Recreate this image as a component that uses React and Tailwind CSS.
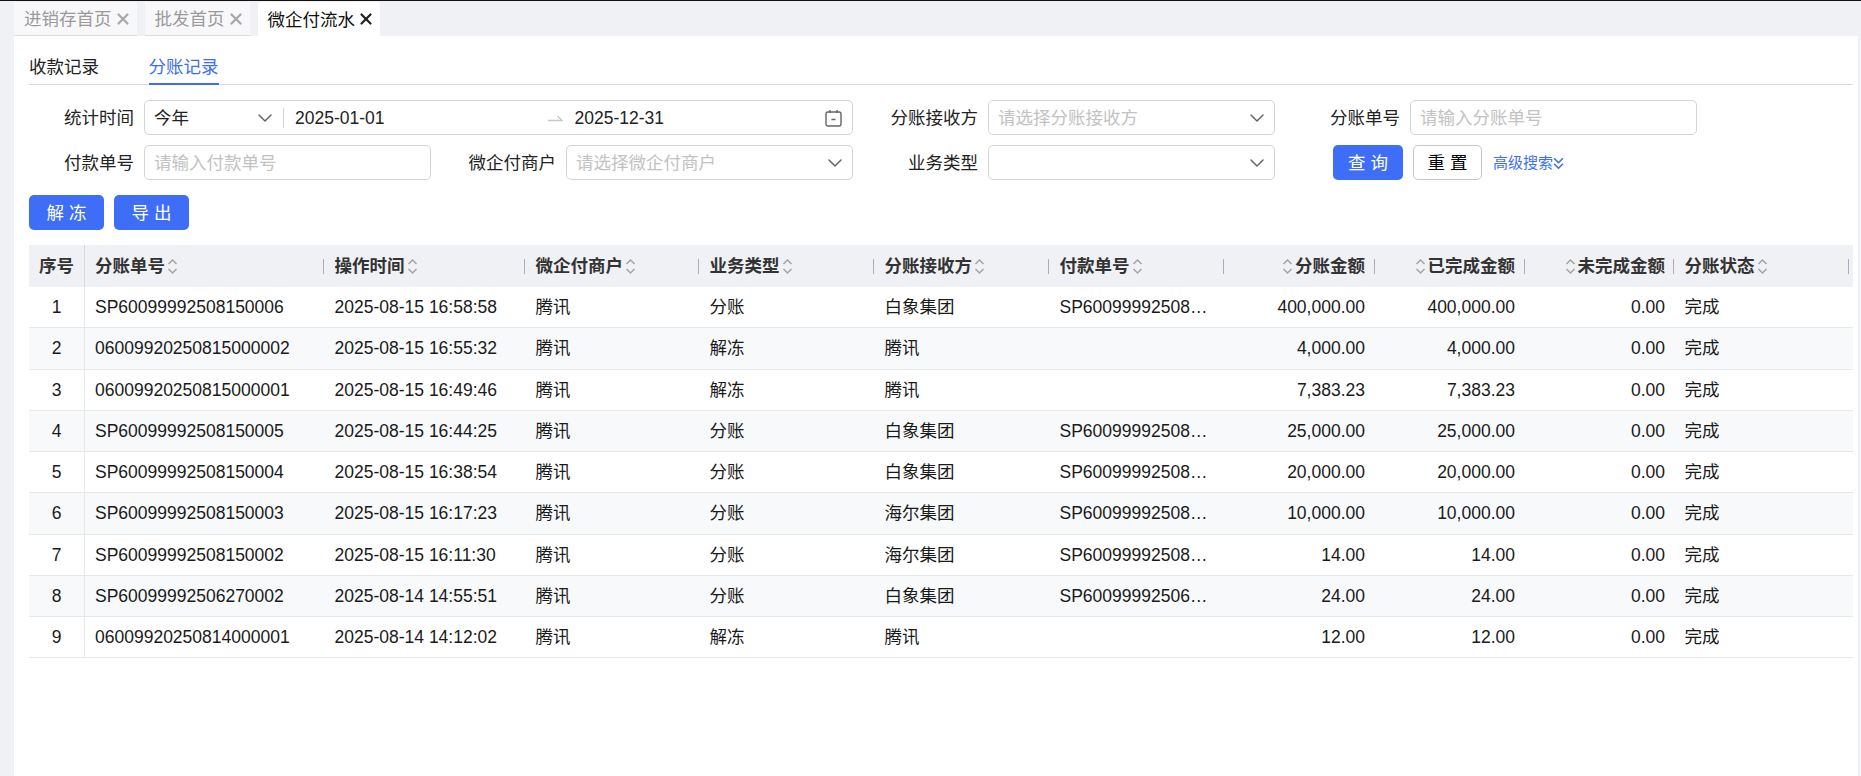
import React from 'react';
import { ChevronDown, ChevronsDown, X } from 'lucide-react';

const COLS = 'grid grid-cols-[56px_239px_201px_174px_175px_175px_175px_151px_150px_149px_175px_4px]';

const rows = [
  ['1', 'SP60099992508150006', '2025-08-15 16:58:58', '分账', '白象集团', 'SP60099992508150006001', '400,000.00', '400,000.00'],
  ['2', '06009920250815000002', '2025-08-15 16:55:32', '解冻', '腾讯', '', '4,000.00', '4,000.00'],
  ['3', '06009920250815000001', '2025-08-15 16:49:46', '解冻', '腾讯', '', '7,383.23', '7,383.23'],
  ['4', 'SP60099992508150005', '2025-08-15 16:44:25', '分账', '白象集团', 'SP60099992508150005001', '25,000.00', '25,000.00'],
  ['5', 'SP60099992508150004', '2025-08-15 16:38:54', '分账', '白象集团', 'SP60099992508150004001', '20,000.00', '20,000.00'],
  ['6', 'SP60099992508150003', '2025-08-15 16:17:23', '分账', '海尔集团', 'SP60099992508150003001', '10,000.00', '10,000.00'],
  ['7', 'SP60099992508150002', '2025-08-15 16:11:30', '分账', '海尔集团', 'SP60099992508150002001', '14.00', '14.00'],
  ['8', 'SP60099992506270002', '2025-08-14 14:55:51', '分账', '白象集团', 'SP60099992506270002001', '24.00', '24.00'],
  ['9', '06009920250814000001', '2025-08-14 14:12:02', '解冻', '腾讯', '', '12.00', '12.00'],
];

const heads = [
  { t: '分账单号', pad: 'px-[10px]' },
  { t: '操作时间', pad: 'px-[10.5px]' },
  { t: '微企付商户', pad: 'px-[10.5px]' },
  { t: '业务类型', pad: 'px-[10.5px]' },
  { t: '分账接收方', pad: 'px-[10.5px]' },
  { t: '付款单号', pad: 'px-[10.5px]' },
  { t: '分账金额', right: true, pad: 'pl-[4px] pr-[9px]' },
  { t: '已完成金额', right: true, pad: 'pl-[4px] pr-[9px]' },
  { t: '未完成金额', right: true, pad: 'pl-[4px] pr-[8px]' },
  { t: '分账状态', pad: 'px-[10.5px]' },
];

function SortIcon() {
  return (
    <svg width="11" height="17" viewBox="0 0 11 17" fill="none" stroke="#a3a3a3" strokeWidth="1.5" className="shrink-0">
      <path d="M1.5 6 5.5 2l4 4" />
      <path d="M1.5 11l4 4 4-4" />
    </svg>
  );
}

function CalendarIcon() {
  return (
    <svg width="17" height="18" viewBox="0 0 17 18" fill="none" stroke="#666" strokeWidth="1.4">
      <rect x="1" y="3" width="15" height="14" rx="2" />
      <path d="M5 1v3M12 1v3M6.5 10.5h4" />
    </svg>
  );
}

function Select({ placeholder }) {
  return (
    <div className="flex h-[35px] items-center justify-between rounded-[5px] border border-[#d4d4d4] pl-[9px] pr-[5px]">
      <span className="pt-[2px] text-[#c2c2c2]">{placeholder}</span>
      <ChevronDown size={24} strokeWidth={1.5} className="text-[#666]" />
    </div>
  );
}

function Field({ label, children, span }) {
  return (
    <div className={`flex items-center pr-[20px] ${span ? 'col-span-2' : ''}`}>
      <label className="w-[105px] shrink-0 pt-[2px] text-right">{label}</label>
      <div className="ml-[10px] min-w-0 flex-1">{children}</div>
    </div>
  );
}

function TextInput({ placeholder }) {
  return (
    <input
      placeholder={placeholder}
      className="h-[35px] w-full rounded-[5px] border border-[#d4d4d4] px-[9px] pt-[2px] outline-none placeholder:text-[#c2c2c2]"
    />
  );
}

function Tab({ title, active }) {
  return (
    <div
      className={`flex h-[34px] items-center gap-[2px] pl-[10px] pr-[5px] ${
        active ? 'rounded-t-[3px] bg-white text-[#111]' : 'border-b border-[#dedede] bg-[#f8f8fa] text-[#9a9a9a]'
      }`}
    >
      <span className="pt-[2px]">{title}</span>
      <X size={18} strokeWidth={3} className={active ? 'text-[#222]' : 'text-[#a8a8a8]'} />
    </div>
  );
}

function TableHeader() {
  return (
    <div className={`${COLS} h-[42px] bg-[#f0f1f5] font-bold text-[#333]`}>
      <div className="flex items-center justify-center border-r border-[#d5d8e0]">序号</div>
      {heads.map((h) => (
        <div key={h.t} className="flex min-w-0 items-center">
          <div className={`flex min-w-0 flex-1 items-center gap-[2px] ${h.pad} ${h.right ? 'justify-end' : ''}`}>
            {h.right && <SortIcon />}
            <span className="whitespace-nowrap">{h.t}</span>
            {!h.right && <SortIcon />}
          </div>
          <span className="h-[15px] w-px shrink-0 bg-[#a9aeb8]" />
        </div>
      ))}
      <div />
    </div>
  );
}

function TableRow({ row, even }) {
  const [no, id, time, type, receiver, pay, amount, done] = row;
  return (
    <div className={`${COLS} h-[41.25px] items-stretch border-b border-[#e7e8ea] text-[#1a1a1a] ${even ? 'bg-[#f7f9fa]' : ''}`}>
      <div className="flex items-center justify-center border-r border-[#e7e8ea]">{no}</div>
      <div className="flex items-center px-[10px]">{id}</div>
      <div className="flex items-center px-[10.5px]">{time}</div>
      <div className="flex items-center px-[10.5px]">腾讯</div>
      <div className="flex items-center px-[10.5px]">{type}</div>
      <div className="flex items-center px-[10.5px]">{receiver}</div>
      <div className="flex min-w-0 items-center px-[10.5px]">
        <span className="truncate">{pay}</span>
      </div>
      <div className="flex items-center justify-end px-[10px]">{amount}</div>
      <div className="flex items-center justify-end px-[10px]">{done}</div>
      <div className="flex items-center justify-end pr-[9px]">0.00</div>
      <div className="flex items-center px-[10.5px]">完成</div>
      <div />
    </div>
  );
}

// watermark lattice measured from the screenshot
function Watermarks() {
  const marks = [];
  for (let i = -6; i < 6; i++) {
    for (let j = -7; j < 4; j++) {
      const x = 1561 + i * 321 + j * 74;
      const y = 720 - i * 25 + j * 120;
      if (x > -120 && x < 1980 && y > -60 && y < 840) marks.push({ x, y });
    }
  }
  return (
    <div className="pointer-events-none absolute inset-0 overflow-hidden">
      {marks.map((m) => (
        <span
          key={`${m.x}-${m.y}`}
          className="absolute -translate-x-1/2 -translate-y-1/2 -rotate-[33deg] whitespace-nowrap text-[30px] font-light text-[rgba(0,0,0,0.014)]"
          style={{ left: m.x, top: m.y }}
        >
          薛福迪-7103
        </span>
      ))}
    </div>
  );
}

export default function App() {
  return (
    <div className="relative flex h-[776px] flex-col overflow-hidden border-t border-[#111] bg-[#f0f1f5] font-['Liberation_Sans','Noto_Sans_CJK_SC',sans-serif] text-[17.5px] text-[#222]">
      <div className="ml-[14px] mt-[1px] flex h-[34px] gap-[8px]">
        <Tab title="进销存首页" />
        <Tab title="批发首页" />
        <Tab title="微企付流水" active />
      </div>

      <main className="ml-[14px] mr-[3px] flex-1 bg-white pl-[15px] pr-[5px]">
        <div className="flex h-[49px] items-end gap-[49.5px] border-b border-[#dcdcdc]">
          <div className="flex h-[35px] items-center pt-[1px] text-[#222]">收款记录</div>
          <div className="-mb-px flex h-[35px] items-center border-b-[2px] border-[#3e6ef8] pt-[1px] text-[#3e6ef8]">分账记录</div>
        </div>

        <div className="mt-[15px] grid grid-cols-[repeat(4,422px)] gap-y-[10px]">
          <Field label="统计时间" span>
            <div className="flex h-[35px] items-center rounded-[5px] border border-[#d4d4d4] pl-[9px] pr-[10px]">
              <span className="pt-[2px]">今年</span>
              <ChevronDown size={24} strokeWidth={1.5} className="ml-[64px] text-[#666]" />
              <span className="ml-[6px] h-[20px] w-px bg-[#d4d4d4]" />
              <span className="ml-[11px] pt-[2px]">2025-01-01</span>
              <svg width="15" height="8" viewBox="0 0 15 8" fill="none" stroke="#c8c8c8" strokeWidth="1.3" className="ml-[163px]">
                <path d="M0 6.5h14L9.5 2" />
              </svg>
              <span className="ml-[12px] pt-[2px]">2025-12-31</span>
              <span className="ml-auto">
                <CalendarIcon />
              </span>
            </div>
          </Field>
          <Field label="分账接收方">
            <Select placeholder="请选择分账接收方" />
          </Field>
          <Field label="分账单号">
            <TextInput placeholder="请输入分账单号" />
          </Field>

          <Field label="付款单号">
            <TextInput placeholder="请输入付款单号" />
          </Field>
          <Field label="微企付商户">
            <Select placeholder="请选择微企付商户" />
          </Field>
          <Field label="业务类型">
            <Select placeholder="" />
          </Field>
          <div className="ml-[38px] flex items-center">
            <button className="h-[35px] w-[70px] rounded-[5px] bg-[#3e6ef8] pl-[5px] pt-[2px] tracking-[5px] text-white">查询</button>
            <button className="ml-[10px] h-[35px] w-[69px] rounded-[5px] border border-[#c6c6c6] pl-[5px] pt-[2px] tracking-[5px] text-black">重置</button>
            <span className="ml-[11px] flex items-center pt-[1px] text-[15px] text-[#3e6ef8]">
              高级搜索
              <ChevronsDown size={19} strokeWidth={2} className="-ml-[4px]" />
            </span>
          </div>
        </div>

        <div className="mt-[15px] flex gap-[10px]">
          <button className="h-[35px] w-[75px] rounded-[5px] bg-[#3e6ef8] pl-[5px] pt-[2px] tracking-[5px] text-white">解冻</button>
          <button className="h-[35px] w-[75px] rounded-[5px] bg-[#3e6ef8] pl-[5px] pt-[2px] tracking-[5px] text-white">导出</button>
        </div>

        <div className="mt-[15px]">
          <TableHeader />
          {rows.map((row, i) => (
            <TableRow key={row[0]} row={row} even={i % 2 === 1} />
          ))}
        </div>
      </main>
      <Watermarks />
    </div>
  );
}
